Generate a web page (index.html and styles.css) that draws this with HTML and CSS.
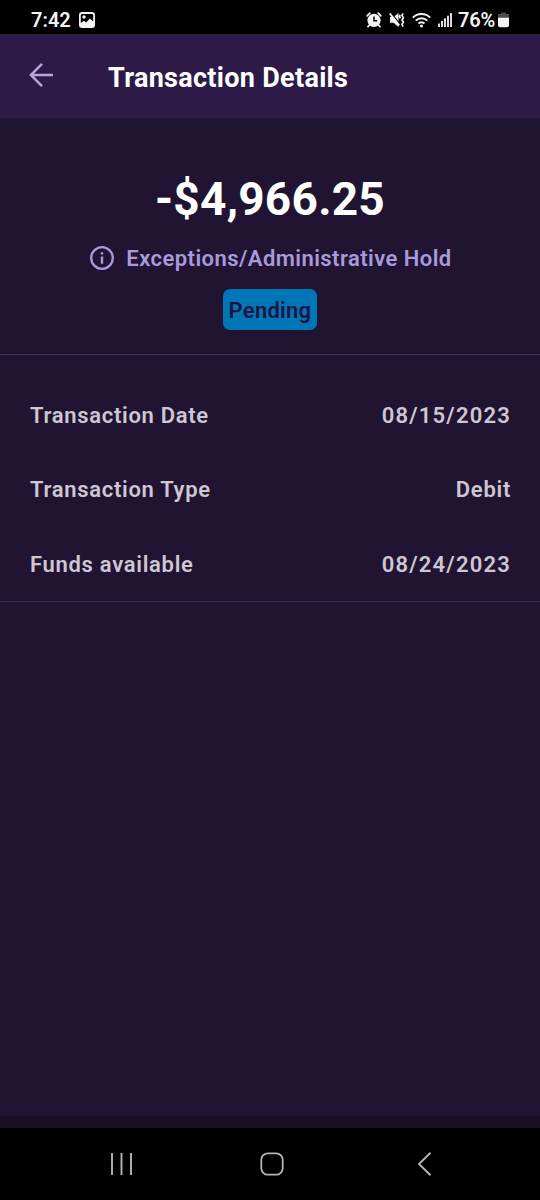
FILE: index.html
```html
<!DOCTYPE html>
<html lang="en">

<head>
    <meta charset="UTF-8">
    <meta name="viewport" content="width=device-width, initial-scale=1.0">
    <title>Transaction Details</title>
    <link rel="stylesheet" href="styles.css">
</head>

<body>
    <div class="screen">
        <div class="status">
            <span class="time">7:42</span>
            <svg class="picture" width="16" height="16" viewBox="0 0 16 16">
                <rect width="16" height="16" rx="3.2" fill="#f4f4f4" />
                <path d="M1.800 11V3.200Q1.800 2 3 2h10Q14.200 2 14.200 3.200V9.500l-3.200-3-4 4-2-1.700z" fill="#000" />
                <circle cx="5" cy="5" r="1.700" fill="#f4f4f4" />
            </svg>
            <div class="status-icons">
                <svg width="16" height="16" viewBox="0 0 16 16">
                    <circle cx="8" cy="8.300" r="6.600" fill="#f4f4f4" />
                    <path d="M1.200 3.800 3.800 1.200M14.800 3.800l-2.600-2.600M3.500 13l-1.500 1.600M12.500 13l1.500 1.600" stroke="#f4f4f4" stroke-width="1.800" stroke-linecap="round" />
                    <path d="M8 4.500v4.300h3.200" fill="none" stroke="#000" stroke-width="1.500" />
                </svg>
                <svg width="16" height="16" viewBox="0 0 16 16">
                    <path d="M1 5h3.500L9.500 1v14l-5-4.200H1z" fill="#f4f4f4" />
                    <path d="M2 1l8.500 10.400" stroke="#000" stroke-width="1.200" />
                    <path d="M.7 1.400l9.600 12" stroke="#f4f4f4" stroke-width="1.700" />
                    <path d="M11.200 3l-.8 1.500 1 1.700M14 1.300l-1 2.200 1.400 2.200L13 7.900l1.400 2.200-1.400 2.200 1 2.400" fill="none" stroke="#f4f4f4" stroke-width="1.700" />
                </svg>
                <svg width="19" height="16" viewBox="0 0 19 16">
                    <path d="M.8 5.600a12.300 12.300 0 0 1 17.400 0M3.700 8.700a8.200 8.200 0 0 1 11.600 0M6.500 11.500a4.200 4.200 0 0 1 6 0" fill="none" stroke="#f4f4f4" stroke-width="1.900" />
                    <circle cx="9.500" cy="14" r="1.500" fill="#f4f4f4" />
                </svg>
                <svg width="14" height="16" viewBox="0 0 14 16">
                    <path d="M1 11.500V15M4 9v6M7 6.300V15M10 3.800V15M13 1v14" stroke="#f4f4f4" stroke-width="1.800" />
                </svg>
                <span class="percent">76%</span>
                <svg width="11" height="16" viewBox="0 0 11 16">
                    <path d="M3.200.5h4.600V2H11v4H0V2h3.200z" fill="#4d4d4d" />
                    <path d="M0 5.800h11v7.400q0 2-2 2H2q-2 0-2-2z" fill="#f4f4f4" />
                </svg>
            </div>
        </div>

        <div class="header">
            <svg class="back" width="26" height="26" viewBox="0 0 26 26">
                <path d="M25 13H3M14 1.900 2.900 13 14 24.100" fill="none" stroke="#b5a6d8" stroke-width="2.500" />
            </svg>
            <h1>Transaction Details</h1>
        </div>

        <div class="summary">
            <div class="amount">-$4,966.25</div>
            <div class="reason">
                <svg width="24" height="24" viewBox="0 0 24 24">
                    <circle cx="12" cy="12" r="10.800" fill="none" stroke="#a99adb" stroke-width="2.300" />
                    <path d="M12 10.500v7.300M12 6.200v2.400" stroke="#a99adb" stroke-width="2.400" />
                </svg>
                <span>Exceptions/Administrative Hold</span>
            </div>
            <div class="badge">Pending</div>
        </div>

        <ul class="details">
            <li><span>Transaction Date</span><span class="date">08/15/2023</span></li>
            <li><span>Transaction Type</span><span>Debit</span></li>
            <li><span>Funds available</span><span class="date">08/24/2023</span></li>
        </ul>

        <div class="strip"></div>
        <div class="nav">
            <svg width="24" height="24" viewBox="0 0 24 24">
                <path d="M3 1v22M12.500 1v22M22 1v22" stroke="#b4b4b4" stroke-width="1.900" />
            </svg>
            <svg width="24" height="24" viewBox="0 0 24 24">
                <rect x="1.300" y="1.300" width="21.400" height="21.400" rx="6.500" fill="none" stroke="#b4b4b4" stroke-width="1.800" />
            </svg>
            <svg width="24" height="24" viewBox="0 0 24 24">
                <path d="M18.500.8 7 12l11.500 11.200" fill="none" stroke="#b4b4b4" stroke-width="1.900" />
            </svg>
        </div>
    </div>
</body>

</html>
```
FILE: styles.css
```css
* {
    margin: 0;
    padding: 0;
    box-sizing: border-box;
}

body {
    font-family: Roboto, "Liberation Sans", sans-serif;
    background-color: #000;
}

ul,
li {
    list-style: none;
}

svg {
    display: block;
    flex-shrink: 0;
}

.screen {
    width: 540px;
    height: 1200px;
    display: flex;
    flex-direction: column;
    background-color: #211332;
}

.status {
    height: 34px;
    padding: 6px 31px 0 31px;
    display: flex;
    align-items: center;
    background-color: #000;
    color: #f4f4f4;
    font-size: 20px;
    font-weight: 600;
}

.picture {
    margin-left: 8px;
}

.status-icons {
    margin-left: auto;
    display: flex;
    align-items: center;
}

.status-icons svg {
    margin-right: 7px;
}

.status-icons .percent {
    margin-left: -1px;
    letter-spacing: -0.2px;
}

.status-icons svg:last-child {
    margin: 0 0 0 3px;
}

.header {
    height: 84px;
    padding: 0 28px;
    display: flex;
    align-items: center;
    background-color: #2e1a47;
}

.back {
    margin-bottom: 2px;
}

.header h1 {
    margin: 3px 0 0 54px;
    font-size: 27px;
    font-weight: 700;
    letter-spacing: 0.3px;
    color: #fff;
}

.summary {
    height: 237px;
    padding-top: 53px;
    display: flex;
    flex-direction: column;
    align-items: center;
    border-bottom: 1px solid #40305a;
}

.amount {
    line-height: 56px;
    font-size: 46px;
    font-weight: 700;
    letter-spacing: 0.25px;
    color: #fff;
}

.reason {
    height: 26px;
    margin-top: 18px;
    padding-left: 2px;
    display: flex;
    align-items: center;
    gap: 12px;
    font-size: 22px;
    font-weight: 600;
    letter-spacing: 0.45px;
    color: #a99adb;
}

.badge {
    height: 41px;
    margin-top: 18px;
    padding: 0 6px;
    line-height: 43px;
    border-radius: 7px;
    background-color: #0076b6;
    font-size: 22px;
    font-weight: 600;
    letter-spacing: 0.25px;
    color: #1b1544;
}

.details {
    height: 247px;
    padding: 23px 29px 0 30px;
    border-bottom: 1px solid #392950;
}

.details li {
    height: 74.5px;
    display: flex;
    justify-content: space-between;
    align-items: center;
    font-size: 22px;
    font-weight: 600;
    letter-spacing: 0.7px;
    color: #cec7d2;
}

.details .date {
    letter-spacing: 1.2px;
}

.strip {
    height: 12px;
    margin-top: auto;
    background-color: #1a1025;
}

.nav {
    height: 72px;
    padding: 0 104px 0 109px;
    display: flex;
    justify-content: space-between;
    align-items: center;
    background-color: #000;
}

.nav svg:nth-child(2) {
    margin-left: -1px;
}
```
